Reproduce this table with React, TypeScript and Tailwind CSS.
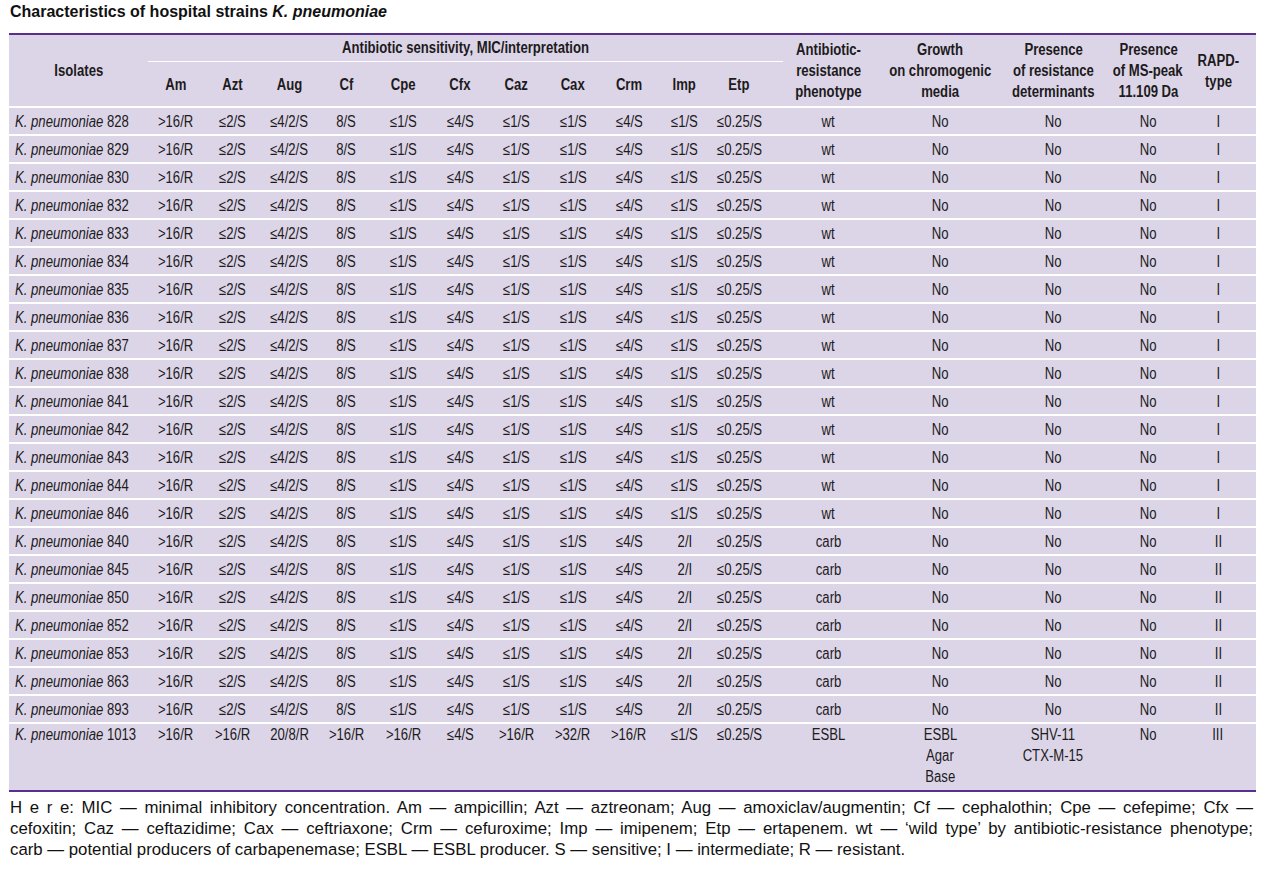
import React from "react";

const wtVals = [">16/R", "≤2/S", "≤4/2/S", "8/S", "≤1/S", "≤4/S", "≤1/S", "≤1/S", "≤4/S", "≤1/S", "≤0.25/S"];
const carbVals = [">16/R", "≤2/S", "≤4/2/S", "8/S", "≤1/S", "≤4/S", "≤1/S", "≤1/S", "≤4/S", "2/I", "≤0.25/S"];

type Row = { id: string; vals: string[]; pheno: string; growth: string[]; det: string[]; ms: string; rapd: string };

const rows: Row[] = [
  ...["828", "829", "830", "832", "833", "834", "835", "836", "837", "838", "841", "842", "843", "844", "846"].map((id) => ({
    id,
    vals: wtVals,
    pheno: "wt",
    growth: ["No"],
    det: ["No"],
    ms: "No",
    rapd: "I",
  })),
  ...["840", "845", "850", "852", "853", "863", "893"].map((id) => ({
    id,
    vals: carbVals,
    pheno: "carb",
    growth: ["No"],
    det: ["No"],
    ms: "No",
    rapd: "II",
  })),
  {
    id: "1013",
    vals: [">16/R", ">16/R", "20/8/R", ">16/R", ">16/R", "≤4/S", ">16/R", ">32/R", ">16/R", "≤1/S", "≤0.25/S"],
    pheno: "ESBL",
    growth: ["ESBL", "Agar", "Base"],
    det: ["SHV-11", "CTX-M-15"],
    ms: "No",
    rapd: "III",
  },
];

const abx = ["Am", "Azt", "Aug", "Cf", "Cpe", "Cfx", "Caz", "Cax", "Crm", "Imp", "Etp"];
const abxW = [56, 57, 57, 57, 57, 56, 57, 56, 56, 55, 54];

function N({ children, left }: { children: React.ReactNode; left?: boolean }) {
  return (
    <span className={`inline-block whitespace-nowrap scale-x-[0.82] ${left ? "origin-left" : "origin-center"}`}>{children}</span>
  );
}

function Lines({ lines }: { lines: string[] }) {
  return (
    <div className="flex flex-col items-center">
      {lines.map((l) => (
        <N key={l}>{l}</N>
      ))}
    </div>
  );
}

export default function App() {
  return (
    <div
      className="bg-white text-[#1d1b1c] w-[1263px] h-[874px] overflow-hidden"
      style={{ fontFamily: '"Liberation Sans", Arial, sans-serif' }}
    >
      <div className="pl-[10px] pt-[3px] h-[33px] text-[16px] leading-[18px] font-bold text-[#111]">
        Characteristics of hospital strains <i>K. pneumoniae</i>
      </div>
      <table className="ml-[9px] w-[1247px] table-fixed border-collapse bg-[#dcd5e8] border-t-2 border-b-2 border-[#5a2e8c] text-[16px]">
        <colgroup>
          <col style={{ width: 139 }} />
          {abxW.map((w, i) => (
            <col key={i} style={{ width: w }} />
          ))}
          <col style={{ width: 124 }} />
          <col style={{ width: 100 }} />
          <col style={{ width: 126 }} />
          <col style={{ width: 64 }} />
          <col />
        </colgroup>
        <thead className="font-bold leading-[21px]">
          <tr>
            <th rowSpan={2} className="align-middle font-bold border-b-2 border-white p-0">
              <Lines lines={["Isolates"]} />
            </th>
            <th colSpan={11} className="h-[25px] p-0 align-middle font-bold">
              <div className="border-b border-white -mr-[17px] pb-[3px] pt-[2px] flex justify-center">
                <N>Antibiotic sensitivity, MIC/interpretation</N>
              </div>
            </th>
            <th rowSpan={2} className="font-bold border-b-2 border-white p-0">
              <Lines lines={["Antibiotic-", "resistance", "phenotype"]} />
            </th>
            <th rowSpan={2} className="font-bold border-b-2 border-white p-0">
              <Lines lines={["Growth", "on chromogenic", "media"]} />
            </th>
            <th rowSpan={2} className="font-bold border-b-2 border-white p-0">
              <Lines lines={["Presence", "of resistance", "determinants"]} />
            </th>
            <th rowSpan={2} className="font-bold border-b-2 border-white p-0">
              <Lines lines={["Presence", "of MS-peak", "11.109 Da"]} />
            </th>
            <th rowSpan={2} className="font-bold border-b-2 border-white p-0">
              <Lines lines={["RAPD-", "type"]} />
            </th>
          </tr>
          <tr>
            {abx.map((a) => (
              <th key={a} className="h-[45px] font-bold border-b-2 border-white p-0">
                <Lines lines={[a]} />
              </th>
            ))}
          </tr>
        </thead>
        <tbody className="leading-[21px]">
          {rows.map((r, idx) => {
            const last = idx === rows.length - 1;
            const cell = last ? "align-top h-[68px] p-0" : "h-[28px] align-middle p-0";
            const border = last ? "" : "border-b-2 border-white";
            return (
              <tr key={r.id} className={border}>
                <td className={`${cell} pl-[6px]`}>
                  <N left>
                    <i>K. pneumoniae</i> {r.id}
                  </N>
                </td>
                {r.vals.map((v, i) => (
                  <td key={i} className={cell}>
                    <Lines lines={[v]} />
                  </td>
                ))}
                <td className={cell}>
                  <Lines lines={[r.pheno]} />
                </td>
                <td className={cell}>
                  <Lines lines={r.growth} />
                </td>
                <td className={cell}>
                  <Lines lines={r.det} />
                </td>
                <td className={cell}>
                  <Lines lines={[r.ms]} />
                </td>
                <td className={cell}>
                  <Lines lines={[r.rapd]} />
                </td>
              </tr>
            );
          })}
        </tbody>
      </table>
      <div className="mx-[10px] mt-[5px] text-[16.8px] leading-[21px] text-[#111]">
        <p className="text-justify [text-align-last:justify]">
          H e r e: MIC — minimal inhibitory concentration. Am — ampicillin; Azt — aztreonam; Aug — amoxiclav/augmentin; Cf —
          cephalothin; Cpe — cefepime; Cfx —
        </p>
        <p className="text-justify [text-align-last:justify]">
          cefoxitin; Caz — ceftazidime; Cax — ceftriaxone; Crm — cefuroxime; Imp — imipenem; Etp — ertapenem. wt — ‘wild type’ by
          antibiotic-resistance phenotype;
        </p>
        <p>carb — potential producers of carbapenemase; ESBL — ESBL producer. S — sensitive; I — intermediate; R — resistant.</p>
      </div>
    </div>
  );
}
